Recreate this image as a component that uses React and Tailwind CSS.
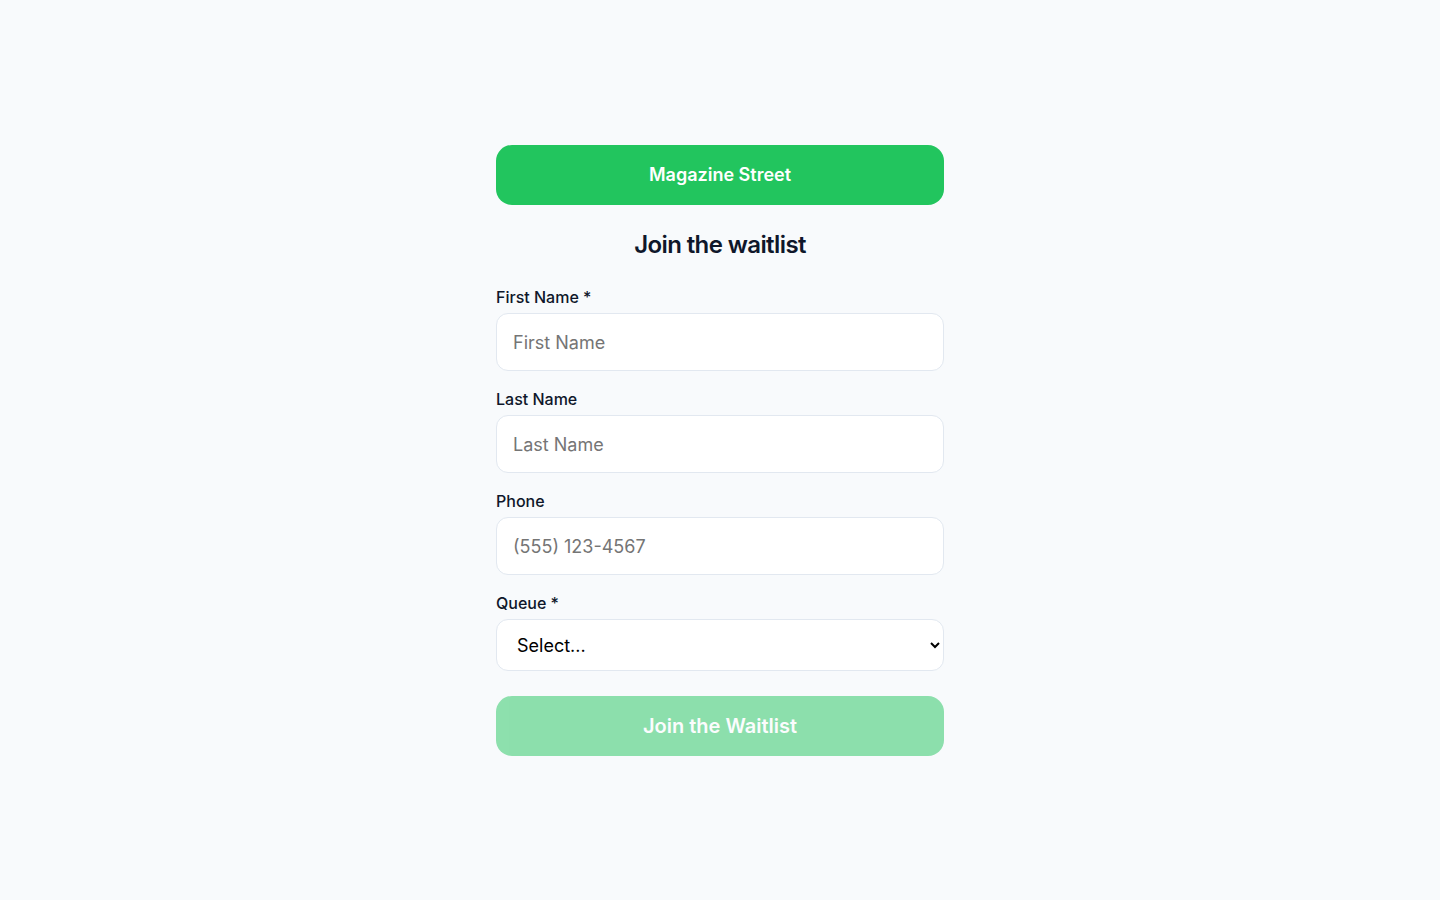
import React from 'react';

const Field = ({ label, required, placeholder, type = 'text' }) => (
  <div className="flex flex-col gap-1">
    <label className="text-base font-medium leading-6 text-[#0f172a]">
      {label}
      {required && ' *'}
    </label>
    <input
      type={type}
      placeholder={placeholder}
      className="h-[58px] w-full rounded-xl border border-[#e2e8f0] bg-white px-4 text-lg text-[#0f172a] placeholder:text-[#757575] outline-none"
    />
  </div>
);

export default function App() {
  return (
    <div
      className="min-h-screen w-full bg-[#f8fafc] flex justify-center"
      style={{ fontFamily: 'Inter, "Noto Sans", sans-serif' }}
    >
      <div className="w-[448px] pt-[145px] flex flex-col">
        <div className="h-[60px] rounded-2xl bg-[#22c55e] flex items-center justify-center text-lg font-semibold text-white">
          Magazine Street
        </div>

        <h1 className="mt-6 text-center text-2xl leading-8 font-semibold text-[#0f172a] tracking-[-0.025em]">
          Join the waitlist
        </h1>

        <form className="mt-6 flex flex-col gap-4" onSubmit={(e) => e.preventDefault()}>
          <Field label="First Name" required placeholder="First Name" />
          <Field label="Last Name" placeholder="Last Name" />
          <Field label="Phone" placeholder="(555) 123-4567" type="tel" />

          <div className="flex flex-col gap-1">
            <label className="text-base font-medium leading-6 text-[#0f172a]">Queue *</label>
            <select
              defaultValue=""
              className="h-[52px] w-full rounded-xl border border-[#e2e8f0] bg-white pl-4 pr-2 text-lg text-black outline-none"
            >
              <option value="">Select...</option>
              <option value="dine-in">Dine-in</option>
              <option value="takeout">Takeout</option>
            </select>
          </div>

          <button
            type="submit"
            disabled
            className="mt-[9px] h-[60px] w-full rounded-2xl bg-[#22c55e] opacity-50 text-xl font-semibold text-white"
          >
            Join the Waitlist
          </button>
        </form>
      </div>
    </div>
  );
}
